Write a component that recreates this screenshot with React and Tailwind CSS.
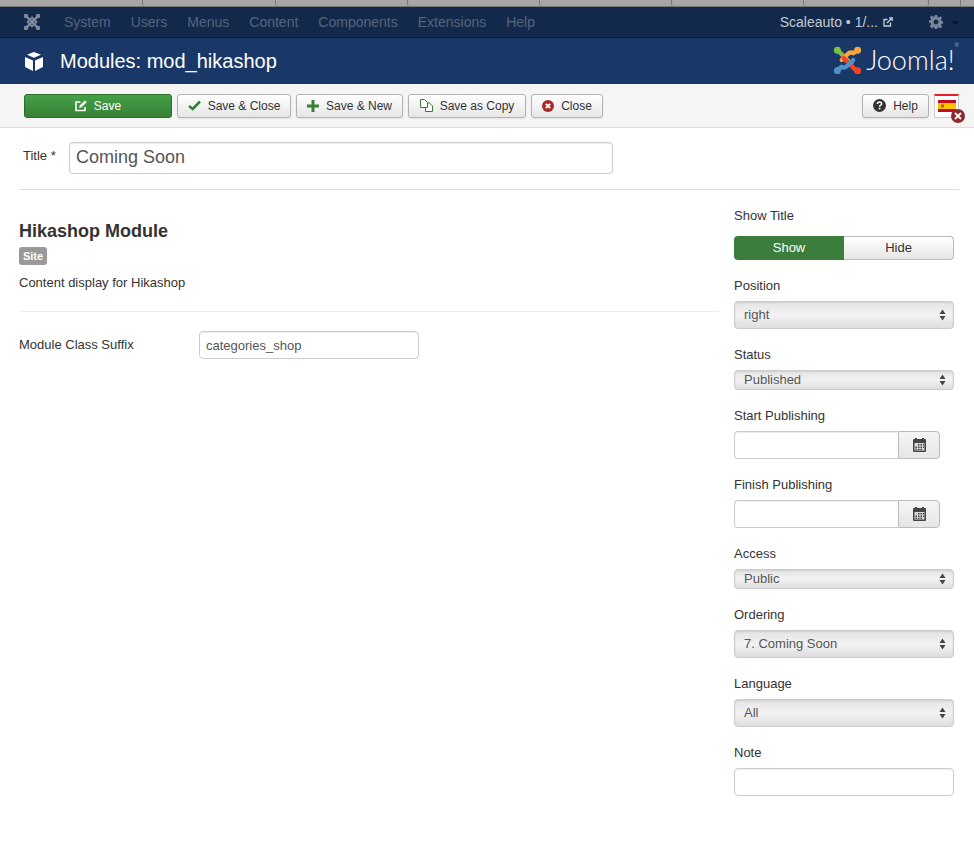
import React from "react";

function JoomlaMark({ className, colors }) {
  return (
    <svg className={className} viewBox="0 0 30 30" fill="none" strokeWidth="4.4" strokeLinecap="round" strokeLinejoin="round">
      <path d="M5 5 L9 9 L19 19" stroke={colors[0]} />
      <path d="M25 5 L21 8 Q18 6 15 9 L9 15" stroke={colors[1]} />
      <path d="M25 25 L21 21 L11 11" stroke={colors[2]} transform="translate(0 2)" />
      <path d="M5 25 L9 22 Q12 24 15 21 L21 15" stroke={colors[3]} />
      <circle cx="4.5" cy="5" r="3.6" fill={colors[0]} />
      <circle cx="25.5" cy="5" r="3.6" fill={colors[1]} />
      <circle cx="25.5" cy="26" r="3.6" fill={colors[2]} />
      <circle cx="4.5" cy="26" r="3.6" fill={colors[3]} />
    </svg>
  );
}

function ToolbarButton({ width, icon, children }) {
  return (
    <button className={`${width} h-6 flex items-center justify-center gap-[7px] rounded-[3px] border border-[#b3b3b3] bg-gradient-to-b from-white to-[#e6e6e6] text-[12px] text-[#333] shadow-[0_1px_2px_rgba(0,0,0,0.08)]`}>
      {icon}
      <span>{children}</span>
    </button>
  );
}

function Field({ label, mb = "mb-[6px]", children }) {
  return (
    <div className="mb-[17px]">
      <div className={`h-[18px] leading-[18px] text-[13px] text-[#333] ${mb}`}>{label}</div>
      {children}
    </div>
  );
}

function Select({ value, height }) {
  return (
    <div className={`${height} w-[220px] flex items-center justify-between pl-[9px] pr-[7px] rounded-[4px] border border-[#ccc] bg-gradient-to-b from-[#e4e4e4] via-[#f2f2f2] to-[#dedede] text-[13px] text-[#555] shadow-[inset_0_1px_2px_rgba(0,0,0,0.1)]`}>
      <span>{value}</span>
      <svg className="w-[7px] h-[12px]" viewBox="0 0 7 12" fill="#444">
        <path d="M3.5 0.5 L6.5 5 H0.5 Z" />
        <path d="M3.5 11.5 L0.5 7 H6.5 Z" />
      </svg>
    </div>
  );
}

function DateInput() {
  return (
    <div className="flex w-[206px] h-[28px]">
      <div className="w-[164px] rounded-l-[4px] border border-r-0 border-[#ccc] bg-white shadow-[inset_0_1px_1px_rgba(0,0,0,0.075)]" />
      <div className="w-[42px] flex items-center justify-center rounded-r-[4px] border border-[#bbb] bg-gradient-to-b from-[#f5f5f5] to-[#e6e6e6]">
        <svg className="w-[13px] h-[14px]" viewBox="0 0 13 14">
          <rect x="0" y="1" width="13" height="13" rx="1" fill="#444" />
          <rect x="2" y="0" width="2" height="2" fill="#444" />
          <rect x="9" y="0" width="2" height="2" fill="#444" />
          <rect x="1.5" y="5" width="10" height="7.5" fill="#d8d8d8" />
          <path d="M5 6h1.5v1.5H5zM7.5 6H9v1.5H7.5zM10 6h1v1.5h-1zM2.5 8.5H4V10H2.5zM5 8.5h1.5V10H5zM7.5 8.5H9V10H7.5zM10 8.5h1V10h-1zM2.5 10.8H4v1.2H2.5zM5 10.8h1.5v1.2H5zM7.5 10.8H9v1.2H7.5z" fill="#444" />
        </svg>
      </div>
    </div>
  );
}

export default function App() {
  return (
    <div className="min-h-[859px] bg-white font-['Liberation_Sans',Arial,sans-serif] text-[13px] text-[#333]">
      {/* browser tabs peeking out on top */}
      <div className="flex h-[7px] bg-[#a6a6a6] border-b border-[#777]">
        <div className="w-[142px]" />
        <div className="w-[133px] border-l border-[#777] rounded-bl-[3px]" />
        <div className="w-[132px] border-l border-[#777] rounded-bl-[3px]" />
        <div className="w-[132px] border-l border-[#777] rounded-bl-[3px]" />
        <div className="w-[132px] border-l border-[#777] rounded-bl-[3px]" />
        <div className="w-[132px] border-l border-[#777] rounded-bl-[3px]" />
        <div className="w-[126px] border-x border-[#777] rounded-b-[3px]" />
        <div className="w-[32px] border-r border-[#777]" />
      </div>

      <nav className="h-[31px] flex items-center bg-[#13294b] border-b border-[#0c1c35] text-[14px]">
        <svg className="ml-6 w-4 h-4" viewBox="0 0 16 16" fill="none" stroke="#7f8a9b" strokeWidth="2.4" strokeLinecap="round">
          <path d="M2.5 2.5 L13.5 13.5" />
          <path d="M13.5 2.5 L2.5 13.5" />
          <path d="M8 3.5 L12.5 8 L8 12.5 L3.5 8 Z" strokeWidth="1.8" />
          <circle cx="2" cy="2" r="1" fill="#7f8a9b" />
          <circle cx="14" cy="2" r="1" fill="#7f8a9b" />
          <circle cx="2" cy="14" r="1" fill="#7f8a9b" />
          <circle cx="14" cy="14" r="1" fill="#7f8a9b" />
        </svg>
        <div className="ml-6 flex gap-5 text-[#55647c]">
          <span>System</span>
          <span>Users</span>
          <span>Menus</span>
          <span>Content</span>
          <span>Components</span>
          <span>Extensions</span>
          <span>Help</span>
        </div>
        <div className="ml-auto flex items-center text-[#c4cad4]">
          <span>Scaleauto • 1/...</span>
          <svg className="ml-[5px] w-[10px] h-[10px]" viewBox="0 0 10 10" fill="none" stroke="#c4cad4" strokeWidth="1.3">
            <path d="M7.5 5.5 V9 H1 V2.5 H4.5" />
            <path d="M4 6 L9 1 M6 0.8 H9.2 V4" />
          </svg>
          <svg className="ml-[36px] w-[14px] h-[14px]" viewBox="0 0 14 14" fill="#77849a">
            <path fillRule="evenodd" d="M5.8 0h2.4l.3 2 1.2.5 1.7-1.2 1.7 1.7-1.2 1.7.5 1.2 2 .3v2.4l-2 .3-.5 1.2 1.2 1.7-1.7 1.7-1.7-1.2-1.2.5-.3 2H5.8l-.3-2-1.2-.5-1.7 1.2L.9 11l1.2-1.7-.5-1.2-2-.3V5.4l2-.3.5-1.2L.9 2.2 2.6.5l1.7 1.2 1.2-.5zM7 4.6a2.4 2.4 0 1 0 0 4.8 2.4 2.4 0 0 0 0-4.8z" />
          </svg>
          <span className="ml-[8px] mr-[15px] mt-[2px] border-x-[4px] border-x-transparent border-t-[4px] border-t-[#0a1526]" />
        </div>
      </nav>

      <header className="h-[46px] flex items-center bg-[#1a3867]">
        <svg className="ml-[25px] w-[18px] h-[19px]" viewBox="0 0 18 19" fill="#fff">
          <path d="M9 0 L16 2.8 L9 5.8 L2 2.8 Z" />
          <path d="M0 5 L8 8.4 V19 L1 15.6 Q0 15.2 0 14 Z" />
          <path d="M18 5 L10 8.4 V19 L17 15.6 Q18 15.2 18 14 Z" />
        </svg>
        <h1 className="ml-[17px] text-[20px] text-white">Modules: mod_hikashop</h1>
        <div className="ml-auto mr-[15px] mb-[3px] flex items-center">
          <JoomlaMark className="w-[29px] h-[30px]" colors={["#7ac143", "#f9a541", "#f44321", "#5091cd"]} />
          <span className="ml-[4px] font-['Lato',sans-serif] font-light text-[27px] leading-none text-white">Joomla!</span>
          <sup className="text-[6px] text-[#9fb0c8] self-start mt-[3px]">®</sup>
        </div>
      </header>

      <div className="h-[44px] flex items-center px-6 gap-[5px] bg-[#f5f5f5] border-b border-[#ddd]">
        <button className="w-[148px] h-6 flex items-center justify-center gap-[7px] rounded-[3px] border border-[#2c6b2c] bg-gradient-to-b from-[#46a046] to-[#378137] text-[12px] text-white">
          <svg className="w-[12px] h-[12px]" viewBox="0 0 12 12" fill="none" stroke="#fff" strokeWidth="1.6">
            <path d="M10 7 V10.5 H1 V2 H5.5" />
            <path d="M4.5 7.5 L5 5.5 L10 0.8 L11.4 2.2 L6.5 7 Z" fill="#fff" strokeWidth="0.6" />
          </svg>
          <span>Save</span>
        </button>
        <ToolbarButton width="w-[114px]" icon={
          <svg className="w-[13px] h-[11px]" viewBox="0 0 13 11" fill="none" stroke="#378137" strokeWidth="2.6"><path d="M1 6 L4.7 9 L12 1.5" /></svg>
        }>Save &amp; Close</ToolbarButton>
        <ToolbarButton width="w-[107px]" icon={
          <svg className="w-[12px] h-[12px]" viewBox="0 0 12 12" fill="#378137"><path d="M4.5 0h3v4.5H12v3H7.5V12h-3V7.5H0v-3h4.5z" /></svg>
        }>Save &amp; New</ToolbarButton>
        <ToolbarButton width="w-[118px]" icon={
          <svg className="w-[13px] h-[13px]" viewBox="0 0 13 13" fill="#fff" stroke="#378137" strokeWidth="1">
            <path d="M5.5 4 H9.5 L12.5 7 V12.5 H5.5 Z" />
            <path d="M0.5 0.5 H4.5 L7.5 3.5 V8.5 H0.5 Z" />
          </svg>
        }>Save as Copy</ToolbarButton>
        <ToolbarButton width="w-[72px]" icon={
          <svg className="w-[12px] h-[12px]" viewBox="0 0 12 12">
            <circle cx="6" cy="6" r="6" fill="#a82a2a" />
            <path d="M3.8 3.8 L8.2 8.2 M8.2 3.8 L3.8 8.2" stroke="#fff" strokeWidth="1.8" />
          </svg>
        }>Close</ToolbarButton>
        <div className="ml-auto flex items-center gap-[5px] mr-[-9px]">
          <ToolbarButton width="w-[67px]" icon={
            <svg className="w-[13px] h-[13px]" viewBox="0 0 13 13">
              <circle cx="6.5" cy="6.5" r="6.5" fill="#333" />
              <path d="M4.4 5 Q4.5 3 6.5 3 Q8.6 3 8.6 4.8 Q8.6 5.8 7.4 6.4 Q6.6 6.8 6.6 7.8" fill="none" stroke="#fff" strokeWidth="1.5" />
              <rect x="5.8" y="8.8" width="1.6" height="1.6" fill="#fff" />
            </svg>
          }>Help</ToolbarButton>
          <div className="relative w-[25px] h-6 border border-[#ccc] border-t-2 border-t-[#e8202a] bg-white flex items-center justify-center">
            <svg className="w-[18px] h-[12px] mt-[-1px]" viewBox="0 0 18 12">
              <rect width="18" height="12" fill="#c60b1e" />
              <rect y="3" width="18" height="6" fill="#ffc400" />
              <rect x="3" y="4.5" width="3" height="3" fill="#ad5a1e" />
            </svg>
            <span className="absolute -right-[7px] -bottom-[6px] w-[14px] h-[14px] rounded-full bg-[#8e2a2f] flex items-center justify-center">
              <svg className="w-2 h-2" viewBox="0 0 8 8"><path d="M1 1 L7 7 M7 1 L1 7" stroke="#fff" strokeWidth="1.8" /></svg>
            </span>
          </div>
        </div>
      </div>

      <main className="px-[15px]">
        <div className="pl-1 flex items-center h-[62px] border-b border-[#ddd] ml-1 pl-0 mr-0">
          <label className="w-[46px] -mt-[5px] text-[#333]">Title *</label>
          <input
            readOnly
            value="Coming Soon"
            className="w-[544px] h-[32px] -mt-[2px] px-[6px] rounded-[4px] border border-[#ccc] text-[18px] text-[#555] shadow-[inset_0_1px_1px_rgba(0,0,0,0.075)] outline-none"
          />
        </div>

        <div className="flex">
          <section className="ml-1 w-[700px] pt-[27px]">
            <h2 className="text-[18px] leading-[28px] font-bold text-[#333]">Hikashop Module</h2>
            <span className="mt-[2px] block w-[28px] h-[18px] leading-[18px] text-center rounded-[3px] bg-[#999] text-[11px] font-bold text-white">Site</span>
            <p className="mt-[9px] h-[18px] leading-[18px]">Content display for Hikashop</p>
            <div className="mt-[19px] border-t border-[#eee]" />
            <div className="mt-[19px] flex items-center">
              <label className="w-[180px]">Module Class Suffix</label>
              <input
                readOnly
                value="categories_shop"
                className="w-[220px] h-[28px] px-[6px] rounded-[4px] border border-[#ccc] text-[13px] text-[#555] shadow-[inset_0_1px_1px_rgba(0,0,0,0.075)] outline-none"
              />
            </div>
          </section>

          <aside className="ml-[15px] w-[220px] pt-[17px]">
            <Field label="Show Title" mb="mb-[11px]">
              <div className="flex h-6 text-[13px]">
                <div className="w-[110px] flex items-center justify-center rounded-l-[4px] bg-[#3b7d3c] text-white">Show</div>
                <div className="w-[110px] flex items-center justify-center rounded-r-[4px] border border-l-0 border-[#bbb] bg-gradient-to-b from-white to-[#e6e6e6] text-[#333]">Hide</div>
              </div>
            </Field>
            <Field label="Position"><Select value="right" height="h-[28px]" /></Field>
            <Field label="Status"><Select value="Published" height="h-5" /></Field>
            <Field label="Start Publishing"><DateInput /></Field>
            <Field label="Finish Publishing"><DateInput /></Field>
            <Field label="Access"><Select value="Public" height="h-5" /></Field>
            <Field label="Ordering"><Select value="7. Coming Soon" height="h-[28px]" /></Field>
            <Field label="Language"><Select value="All" height="h-[28px]" /></Field>
            <Field label="Note">
              <div className="w-[220px] h-[28px] rounded-[4px] border border-[#ccc] bg-white shadow-[inset_0_1px_1px_rgba(0,0,0,0.075)]" />
            </Field>
          </aside>
        </div>
      </main>
    </div>
  );
}
